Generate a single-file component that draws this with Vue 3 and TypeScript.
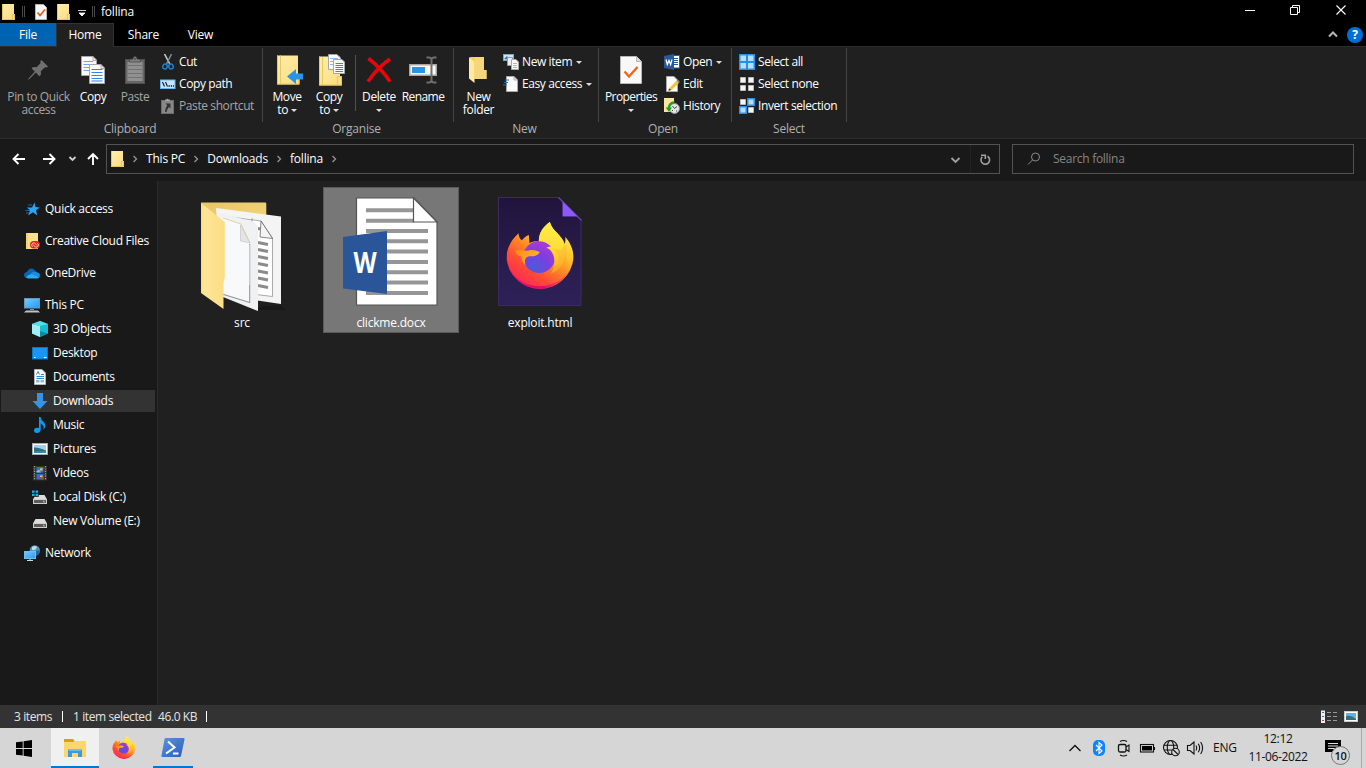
<script setup lang="ts">
import { ref } from 'vue'

interface NavItem { label: string; icon: string; child?: boolean; gap?: boolean }
interface FileItem { name: string; icon: string }
interface SmallCommand { label: string; icon: string; menu?: boolean; disabled?: boolean }

const tabs = ['Home', 'Share', 'View']
const activeTab = ref('Home')

const clipboard: SmallCommand[] = [
  { label: 'Cut', icon: 'cut' },
  { label: 'Copy path', icon: 'copypath' },
  { label: 'Paste shortcut', icon: 'shortcut', disabled: true },
]
const creation: SmallCommand[] = [
  { label: 'New item', icon: 'newitem', menu: true },
  { label: 'Easy access', icon: 'easy', menu: true },
]
const opening: SmallCommand[] = [
  { label: 'Open', icon: 'word', menu: true },
  { label: 'Edit', icon: 'edit' },
  { label: 'History', icon: 'history' },
]
const selecting: SmallCommand[] = [
  { label: 'Select all', icon: 'selall' },
  { label: 'Select none', icon: 'selnone' },
  { label: 'Invert selection', icon: 'selinv' },
]

const crumbs = ['This PC', 'Downloads', 'follina']

const nav: NavItem[] = [
  { label: 'Quick access', icon: 'star' },
  { label: 'Creative Cloud Files', icon: 'ccfiles', gap: true },
  { label: 'OneDrive', icon: 'onedrive', gap: true },
  { label: 'This PC', icon: 'pc', gap: true },
  { label: '3D Objects', icon: 'cube', child: true },
  { label: 'Desktop', icon: 'desktop', child: true },
  { label: 'Documents', icon: 'documents', child: true },
  { label: 'Downloads', icon: 'downloads', child: true },
  { label: 'Music', icon: 'music', child: true },
  { label: 'Pictures', icon: 'pictures', child: true },
  { label: 'Videos', icon: 'videos', child: true },
  { label: 'Local Disk (C:)', icon: 'disk-c', child: true },
  { label: 'New Volume (E:)', icon: 'disk', child: true },
  { label: 'Network', icon: 'network', gap: true },
]
const currentPlace = ref('Downloads')

const files: FileItem[] = [
  { name: 'src', icon: 'file-folder' },
  { name: 'clickme.docx', icon: 'file-word' },
  { name: 'exploit.html', icon: 'file-html' },
]
const selectedFile = ref('clickme.docx')
</script>

<template>
  <div class="screen">
    <svg class="sprite" width="0" height="0" aria-hidden="true">
      <defs>
        <linearGradient id="gFolder" x1="0" y1="0" x2="1" y2="1">
          <stop offset="0" stop-color="#ffeeae" /><stop offset="1" stop-color="#fbdc7d" />
        </linearGradient>
        <linearGradient id="gFlap" x1="0" y1="0" x2="1" y2="0">
          <stop offset="0" stop-color="#fbdb7c" /><stop offset="0.15" stop-color="#ffe597" /><stop offset="1" stop-color="#fbdd84" />
        </linearGradient>
        <linearGradient id="gBack" x1="0" y1="0" x2="1" y2="1">
          <stop offset="0" stop-color="#e9c566" /><stop offset="1" stop-color="#f7d982" />
        </linearGradient>
        <linearGradient id="gScreen" x1="0" y1="0" x2="1" y2="1">
          <stop offset="0" stop-color="#7cc9fb" /><stop offset="1" stop-color="#1f9cf5" />
        </linearGradient>
        <linearGradient id="gPage" x1="0" y1="0" x2="0" y2="1">
          <stop offset="0" stop-color="#21143b" /><stop offset="1" stop-color="#2e2158" />
        </linearGradient>
        <linearGradient id="gFox" x1="0.85" y1="0.12" x2="0.25" y2="0.95">
          <stop offset="0" stop-color="#fff04a" /><stop offset="0.3" stop-color="#ffc02f" />
          <stop offset="0.52" stop-color="#ff8524" /><stop offset="0.76" stop-color="#ff4a38" /><stop offset="1" stop-color="#ff2b4e" />
        </linearGradient>
        <linearGradient id="gFlame" x1="0.5" y1="0" x2="0.4" y2="1">
          <stop offset="0" stop-color="#fff04a" /><stop offset="0.5" stop-color="#ffdc38" /><stop offset="1" stop-color="#ff9a28" />
        </linearGradient>
        <linearGradient id="gRim" x1="0" y1="0" x2="1" y2="0">
          <stop offset="0" stop-color="#f3126c" /><stop offset="0.55" stop-color="#e4076f" /><stop offset="1" stop-color="#ff7a2e" />
        </linearGradient>
        <linearGradient id="gHead" x1="0" y1="0" x2="1" y2="0.4">
          <stop offset="0" stop-color="#ff8a16" /><stop offset="1" stop-color="#ffb52c" />
        </linearGradient>
        <radialGradient id="gGlobe" cx="0.35" cy="0.85" r="0.9">
          <stop offset="0" stop-color="#4b5bd8" /><stop offset="0.5" stop-color="#7a3fe0" /><stop offset="1" stop-color="#b437d8" />
        </radialGradient>
        <linearGradient id="gPs" x1="0" y1="0" x2="1" y2="1">
          <stop offset="0" stop-color="#5b93e6" /><stop offset="1" stop-color="#2a5dbc" />
        </linearGradient>
      </defs>

      <symbol id="folder" viewBox="0 0 14 16">
        <path d="M0 0H12V10H13V16H0Z" fill="url(#gFolder)" /><path d="M.5 0V15.5H12.5V10.5H10.5V15" fill="none" stroke="#e8c44f" stroke-width=".9" />
      </symbol>
      <symbol id="sheet-check" viewBox="0 0 12 16">
        <path d="M.5.5H8.5L11.5 3.5V15.5H.5Z" fill="#f7f7f7" stroke="#b5b5b5" /><path d="M2.500 8.500L5 11.500L10 5.500" fill="none" stroke="#ee5a14" stroke-width="1.700" />
      </symbol>
      <symbol id="pin" viewBox="0 0 20 20">
        <path d="M13.500 0L20 6.500L18.500 7.500L17 7.200L12.800 11.300L13 14.600L11.400 16.200L7.800 12.600L1.500 19L0 20L.8 18.200L6.800 11.600L3.600 8.400L5.100 7L8.500 7.200L12.700 3L12.200 1.300Z" fill="#757575" />
      </symbol>
      <symbol id="copydoc" viewBox="0 0 24 28">
        <path d="M.5.5H12L15.500 4V19.500H.5Z" fill="#fafafa" stroke="#a6a6a6" /><path d="M12 .5V4.500H15.500" fill="none" stroke="#a6a6a6" />
        <path d="M2.500 5.500H12M2.500 8.500H12M2.500 11.500H12M2.500 14.500H12" stroke="#6ea6ec" />
        <path d="M8.500 8.500H20L23.500 12V27.500H8.500Z" fill="#fafafa" stroke="#a6a6a6" /><path d="M20 8.500V12.500H23.500" fill="none" stroke="#a6a6a6" />
        <path d="M10.500 13.500H21.500M10.500 16.500H21.500M10.500 19.500H21.500M10.500 22.500H21.500M10.500 25H21.500" stroke="#3583e2" stroke-width="1.100" />
      </symbol>
      <symbol id="pasteboard" viewBox="0 0 20 28">
        <rect x=".5" y="3.500" width="19" height="24" fill="#6a6a6a" stroke="#525252" /><rect x="2.500" y="6" width="15" height="19" fill="#969696" />
        <path d="M3 9.500H17M3 13.500H17M3 17.500H17M3 21.500H17" stroke="#777" /><path d="M4.500 6V3.500L8 3Q8 .5 10 .5T12 3L15.500 3.500V6Z" fill="#858585" stroke="#4b4b4b" stroke-width=".8" /><circle cx="10" cy="3" r=".8" fill="#333" />
      </symbol>
      <symbol id="cut" viewBox="0 0 16 16">
        <path d="M4.500 0L9.800 10" stroke="#c6ccd2" stroke-width="1.600" /><path d="M11.500 0L6.500 10" stroke="#7f8b96" stroke-width="1.500" />
        <ellipse cx="5" cy="12.500" rx="2.200" ry="2.500" transform="rotate(20 5 12.500)" fill="none" stroke="#1c7fc9" stroke-width="1.600" /><ellipse cx="11" cy="12.500" rx="2.200" ry="2.500" transform="rotate(-20 11 12.500)" fill="none" stroke="#1c7fc9" stroke-width="1.600" />
      </symbol>
      <symbol id="copypath" viewBox="0 0 16 16">
        <rect x=".5" y="4" width="14.500" height="8.500" fill="#c5e6fc" stroke="#6cb5ea" /><path d="M2.500 6L4.500 10.500M5.500 6L7.500 10.500" stroke="#111" stroke-width="1.100" /><path d="M8.500 10H14" stroke="#111" stroke-dasharray="1.300 1" stroke-width="1.300" />
      </symbol>
      <symbol id="shortcut" viewBox="0 0 16 16">
        <rect x="1.500" y="2.500" width="12" height="13" fill="#8e8e8e" stroke="#727272" /><path d="M5 3V1.500H6.500L7.500.5L8.500 1.500H10V3Z" fill="#aaa" />
        <path d="M5.500 5.500H10.500V10.500L9 9Q7 11 6.500 14H5Q5 10 7.200 7.200Z" fill="#333" />
      </symbol>
      <symbol id="moveto" viewBox="0 0 28 30">
        <path d="M1 .5H22V21H23.500V29.500H1Z" fill="url(#gFolder)" /><path d="M1.500.5V29H23V21.500H19.500V29M4.500.5V29" fill="none" stroke="#eac760" /><path d="M11 21.500L20 14V18.500H27V24.500H20V29Z" fill="#2b93e6" />
      </symbol>
      <symbol id="copyto" viewBox="0 0 28 32">
        <path d="M1 2.500H22V22.500H24V31.500H1Z" fill="url(#gFolder)" /><path d="M1.500 2.500V31H23.500V22.500H19.500V31M4.500 3V31" fill="none" stroke="#eac760" />
        <path d="M10.500.5H19L22.500 4V15.500H10.500Z" fill="#fafafa" stroke="#a6a6a6" /><path d="M12 4.500H20M12 7.500H20M12 10.500H20" stroke="#8cb8ee" />
        <path d="M15.500 5.500H24L26.500 8V19.500H15.500Z" fill="#fafafa" stroke="#a6a6a6" /><path d="M17.500 9.500H25M17.500 11.500H25M17.500 13.500H25M17.500 15.500H25M17.500 17.500H25" stroke="#3583e2" />
      </symbol>
      <symbol id="delete" viewBox="0 0 26 26"><path d="M2.500 1.500Q15 11 24 24.500M24 2Q11 11 2 24.500" fill="none" stroke="#e8060c" stroke-width="3.500" /></symbol>
      <symbol id="rename" viewBox="0 0 28 28">
        <rect x=".75" y="8.750" width="26.500" height="10.500" fill="#fafafa" stroke="#a5a5a5" stroke-width="1.500" /><rect x="3" y="11" width="13" height="6" fill="#2b93e6" />
        <path d="M17.500 1.500H20Q22 1.500 22.500 3.500Q23 1.500 25 1.500H27.500M22.500 3.500V24.500M17.500 26.500H20Q22 26.500 22.500 24.500Q23 26.500 25 26.500H27.500" fill="none" stroke="#6f6f6f" stroke-width="2" />
      </symbol>
      <symbol id="newfolder" viewBox="0 0 20 28">
        <path d="M2 1H16V14H18.500V23H5Z" fill="#efcd6c" /><path d="M1 1L6.500 6V27L1 22.500Z" fill="#ffeaa4" /><path d="M6.500 1H16V14H18.500V23H6.500Z" fill="#f5d67b" />
      </symbol>
      <symbol id="newitem" viewBox="0 0 16 16">
        <rect x=".5" y=".5" width="10" height="6" fill="#c9e7fb" stroke="#7da6c4" /><path d="M1 5L4 2L7 6Z" fill="#2f7dac" /><path d="M4.500 3.500H9.500V11.500H4.500Z" fill="#eee" stroke="#999" /><path d="M8.500 5.500H13L15.500 8V15.500H8.500Z" fill="#f8f8f8" stroke="#aaa" /><path d="M10 9.500H14M10 11.500H14M10 13.500H14" stroke="#e8a0a0" />
      </symbol>
      <symbol id="easy" viewBox="0 0 16 16">
        <path d="M3.500.5H11L14.500 4V15.500H3.500Z" fill="#fafafa" stroke="#aaa" /><path d="M11 .5V4H14.500" fill="none" stroke="#aaa" /><path d="M2 4H6M1 6.500H5M0 9H4" stroke="#2273b9" stroke-width="1.200" />
      </symbol>
      <symbol id="properties" viewBox="0 0 22 28">
        <path d="M.5.5H16.500L21.500 5.500V27.500H.5Z" fill="#f8f8f8" stroke="#b6b6b6" /><path d="M16.500.5V5.500H21.500" fill="#ddd" stroke="#b6b6b6" /><path d="M4.500 15.500L9 20.500L17.500 11" fill="none" stroke="#f26514" stroke-width="2.300" />
      </symbol>
      <symbol id="word" viewBox="0 0 16 16">
        <rect x="8.500" y="1.500" width="7" height="12.500" fill="#fff" stroke="#2b579a" /><path d="M10 4.500H14M10 6.500H14M10 8.500H14M10 10.500H14" stroke="#2b579a" /><path d="M0 2L10 0V16L0 14Z" fill="#2b579a" /><path d="M2 5.500L3.300 10.500L5 6.500L6.600 10.500L8 5.500" fill="none" stroke="#fff" stroke-width="1.300" />
      </symbol>
      <symbol id="edit" viewBox="0 0 16 16">
        <path d="M2.500.5H10L13.500 4V15.500H2.500Z" fill="#fafafa" stroke="#aaa" /><path d="M5 12.500L12.500 4.500L15 7L7.500 14L4.500 14.800Z" fill="#f3c53c" /><path d="M12.500 4.500L15 7L15.800 5.500L14 3.800Z" fill="#888" /><path d="M4.500 14.800L5 12.500L7.200 14Z" fill="#333" />
      </symbol>
      <symbol id="history" viewBox="0 0 16 16">
        <path d="M0 0H10V11H11V14H0Z" fill="#ffe599" /><circle cx="10.500" cy="10.500" r="4.900" fill="#e7e7e7" stroke="#9b9b9b" /><path d="M8.500 8L10.500 10.500L13 8.500M8 12.500H9M12 13H13" fill="none" stroke="#444" /><path d="M10.500 4.500Q5 4.500 4.800 11" fill="none" stroke="#20a02c" stroke-width="2.300" /><path d="M1.500 9.500H8L5 14Z" fill="#20a02c" />
      </symbol>
      <symbol id="selall" viewBox="0 0 16 16"><path d="M0 0H16V16H0Z" fill="#2490ea" /><path d="M1.500 1.500H7V7H1.500ZM9 1.500H14.500V7H9ZM1.500 9H7V14.500H1.500ZM9 9H14.500V14.500H9Z" fill="#b6defb" /></symbol>
      <symbol id="selnone" viewBox="0 0 16 16"><path d="M1.500 1.500H6.500V6.500H1.500ZM9.500 1.500H14.500V6.500H9.500ZM1.500 9.500H6.500V14.500H1.500ZM9.500 9.500H14.500V14.500H9.500Z" fill="#f5f5f5" stroke="#bbb" /></symbol>
      <symbol id="selinv" viewBox="0 0 16 16"><path d="M1.500 1.500H6.500V6.500H1.500ZM9.500 9.500H14.500V14.500H9.500Z" fill="#f5f5f5" stroke="#bbb" /><path d="M8.750.75H15.250V7.250H8.750ZM.75 8.750H7.250V15.250H.75Z" fill="#b6defb" stroke="#2490ea" stroke-width="1.500" /></symbol>

      <symbol id="star" viewBox="0 0 16 16"><path d="M10.500 1.500L11.500 6L15.800 6.500L12 9.200L13.300 14.500L9 11.300L4.200 14.500L6 9.200L2.800 6.500H8Z" fill="#2ea3f2" /><path d="M4 4H8M1.500 9.500H6M2 12H5" stroke="#1768ad" /></symbol>
      <symbol id="ccfiles" viewBox="0 0 16 16"><path d="M2 0H14V16H2Z" fill="#ffe08a" /><path d="M3 0V16" stroke="#ebc45c" /><rect x="6" y="8" width="10" height="7.500" rx="3.700" fill="#e1251b" /><path d="M8.500 13.700Q6.500 12 8.500 10.300T12 11.500L13 12.500M13.500 10.300Q15.500 12 13.500 13.700T10 12.500L9 11.500" fill="none" stroke="#ffdcce" stroke-width=".9" /></symbol>
      <symbol id="onedrive" viewBox="0 0 16 16"><path d="M0 10.500A3.500 3.500 0 0 1 3 7A4.500 4.500 0 0 1 11 5.500A3 3 0 0 1 13 8L5 13H3A3 3 0 0 1 0 10.500Z" fill="#0a63b5" /><path d="M6.500 8.500Q9 6 12.500 7.200A3.200 3.200 0 0 1 15.500 12L8 10Z" fill="#1490df" /><path d="M2 12.500Q5 8 8.500 9.500L15.500 12Q14.500 13.500 13 13.500H4Z" fill="#31a8ef" /></symbol>
      <symbol id="pc" viewBox="0 0 16 16"><rect x=".5" y="1.500" width="15" height="9.500" fill="url(#gScreen)" stroke="#6298bf" /><path d="M6 12H10V13H6Z" fill="#7795ab" /><path d="M2 13.500H14L16 15.500H0Z" fill="#b9c4cc" /></symbol>
      <symbol id="cube" viewBox="0 0 16 16"><path d="M8 0L16 3V12.500L8 16L0 12.500V3Z" fill="#19bcd0" /><path d="M0 3L8 5V16L0 12.500Z" fill="#a3eef2" /><path d="M0 3L8 0L16 3L8 5Z" fill="#55dfe5" /><path d="M8 10L16 12.500L8 16Z" fill="#0c8ba7" /></symbol>
      <symbol id="desktop" viewBox="0 0 16 16"><rect x=".5" y="2.500" width="15" height="11.500" fill="#1996f1" stroke="#0b75ce" /><path d="M2 12.500H3.500M12 12.500H14.500" stroke="#fff" /></symbol>
      <symbol id="documents" viewBox="0 0 16 16"><path d="M2.500.5H10L13.500 4V15.500H2.500Z" fill="#fafafa" stroke="#b5b5b5" /><path d="M4.500 5.500L6 2.500L7.500 5.500M9 5.500H12M4.500 7.500H12M4.500 9.500H12" fill="none" stroke="#2b8bd5" /><path d="M4 11H12V13.500H4Z" fill="#91b8ce" /><path d="M8 11V14" stroke="#fff" /></symbol>
      <symbol id="downloads" viewBox="0 0 16 16"><path d="M5 0H11V8H15.500L8 16L.5 8H5Z" fill="#3694e8" /></symbol>
      <symbol id="music" viewBox="0 0 16 16"><path d="M7 0H8.500Q9 3 11.500 5Q15.500 9 11 13Q13 8.500 8.700 6.500V12Q8.500 16 5 16Q2 16 2 13.500T5.500 10.800L7 11Z" fill="#0a9bf5" /></symbol>
      <symbol id="pictures" viewBox="0 0 16 16"><rect x=".5" y="2.500" width="15" height="11" fill="#fff" stroke="#aaa" /><rect x="2" y="4" width="12" height="8" fill="#a5cfee" /><path d="M2 6.500Q6 6 14 9.500V11H2Z" fill="#2f7180" /><path d="M2 10.500L14 10V12H2Z" fill="#3f86b8" /></symbol>
      <symbol id="videos" viewBox="0 0 16 16"><rect x="1" y="1" width="14" height="14.500" fill="#333" /><path d="M2.500 1V15.500M13.500 1V15.500" stroke="#999" stroke-width="1.300" stroke-dasharray="1.200 1.200" /><path d="M4.500 2H11.500V7.500H4.500ZM4.500 9H11.500V14.500H4.500Z" fill="#356dc6" /><path d="M8 3.500L10.500 3V5.500H8ZM8 10.500H10.500V12H8Z" fill="#efbf3a" /><path d="M4.500 6L7 4.500L9 7.500H4.500Z" fill="#90b7e4" /><path d="M9 12H11.500V14.500H9Z" fill="#d13b32" /></symbol>
      <symbol id="disk" viewBox="0 0 16 16"><path d="M3.500 6H12.500L15 10.500H1Z" fill="#dcdcdc" /><rect x="1.500" y="10.500" width="13" height="4" fill="#5c5c5c" stroke="#cfcfcf" /><rect x="11" y="11.700" width="1.700" height="1.700" fill="#56e05a" /></symbol>
      <symbol id="disk-c" viewBox="0 0 16 16"><use href="#disk" width="16" height="16" /><path d="M0 1H6.800V7.800H0Z" fill="#191919" /><path d="M0 1.500H2.600V3.800H0ZM3.600 1.500H6.200V3.800H3.600ZM0 4.800H2.600V7.100H0ZM3.600 4.800H6.200V7.100H3.600Z" fill="#14b3f0" /></symbol>
      <symbol id="network" viewBox="0 0 16 16"><circle cx="10.800" cy="5.500" r="5.200" fill="#4f94bf" /><path d="M8 2Q11 0 13 2L11 5L8 5Z" fill="#b6e0ed" /><path d="M12 6L16 5L14 10H11Z" fill="#26668f" /><rect x=".5" y="6.500" width="11" height="7" fill="url(#gScreen)" stroke="#77bdec" /><path d="M3 15.500H9M6 14V15.500" stroke="#c7d9e5" /></symbol>

      <symbol id="file-folder" viewBox="0 0 136 125">
        <path d="M107 118L112 123H80L82 120Z" fill="#161616" opacity=".6" />
        <path d="M27 15.500H91.500Q92.300 15.500 92.300 17V62H27Z" fill="url(#gBack)" />
        <path d="M42 21L107 29.500V117L48 108Z" fill="#f4f4f4" />
        <path d="M57 30L87 34L98.500 51V109.500L78 107V31" fill="#fff" stroke="#888" stroke-width=".7" />
        <path d="M87 34L86 50L98.500 51.500Z" fill="#f4f4f4" stroke="#555" stroke-width=".7" />
        <path d="M80 41L87 42M84 55.500L94 57.500M84 62.500L94 64.500M84 69.500L94 71.500M84 76.500L94 78.500M84 84L94 86M84 91L94 93M84 98.500L94 100.500" stroke="#8b8b8b" stroke-width="3" />
        <path d="M43 25L80 35L84 39V124L49 110Z" fill="#f0f1f2" />
        <path d="M47 31L66 37L76 56V115L49 106Z" fill="#f8f9fb" />
        <path d="M49 31L67 37L76 56" fill="none" stroke="#e5d3a6" /><path d="M66.500 38V54L76 56Z" fill="#e4e4e5" stroke="#b9b9b9" stroke-width=".5" />
        <path d="M75.700 57V115.500L48 107" fill="none" stroke="#666" stroke-width=".7" /><path d="M75.500 58V98" stroke="#ead49a" stroke-width=".8" />
        <path d="M27 16L50.800 35V91L49.500 95V122L27 106Z" fill="url(#gFlap)" />
      </symbol>
      <symbol id="file-word" viewBox="0 0 136 125">
        <path d="M33.500 10.800H91L114 35V118H33.500Z" fill="#fff" stroke="#555" stroke-width="1.200" />
        <path d="M43 23.200H91M43 33.700H91M43 44H105M43 54.300H105M43 64.600H105M43 75H105M43 85.200H105M43 95.600H105M43 106H105" stroke="#969696" stroke-width="4" />
        <path d="M90.500 11V35H114Z" fill="#fff" stroke="#555" stroke-width="1.200" />
        <path d="M20 50L64 44V107L20 101.500Z" fill="#2a5699" />
        <text x="42" y="86" text-anchor="middle" textLength="23" lengthAdjust="spacingAndGlyphs" fill="#fff" font-family="'Open Sans', sans-serif" font-size="29" font-weight="700">W</text>
      </symbol>
      <symbol id="firefox" viewBox="0 0 202 210">
        <path d="M36 34C17 51 0 76 0 109A101 101 0 0 0 201 109C202 84 191 60 176 44C178 52 177 60 174 66C167 39 139 30 130 0C111 13 97 32 97 58C85 57 77 59 69 63L67 39C57 42 50 50 46 55C39 51 37 43 36 34Z" fill="url(#gFox)" />
        <path d="M0 109A101 101 0 0 0 201 109C199 157 150 193 100 193C46 193 4 154 0 109Z" fill="url(#gRim)" />
        <circle cx="98" cy="105" r="48" fill="url(#gGlobe)" />
        <path d="M130 0C111 13 97 32 97 58C113 58 126 64 134 75C128 74 124 75 120 77C143 85 153 122 133 155C171 141 184 98 174 66C167 39 139 30 130 0Z" fill="url(#gFlame)" />
        <path d="M138 78C162 94 166 128 133 155C178 144 188 104 174 66C168 88 155 85 138 78Z" fill="#ff9d28" opacity=".3" />
        <path d="M26 86C36 83 51 85 62 86C74 82 87 84 100 90C96 99 86 103 75 103C59 102 52 110 57 130C44 121 48 108 43 103C34 101 28 96 26 86Z" fill="url(#gHead)" />
      </symbol>
      <symbol id="file-html" viewBox="0 0 136 125">
        <path d="M26.500 10.500H87L109 33V118.500H26.500Z" fill="url(#gPage)" stroke="#3c2a60" />
        <path d="M86 10.500L109 33.500L105 30H90V14Z" fill="#150c2e" /><path d="M86.500 10.500L109.500 33.500" stroke="#6544a8" stroke-width="1.200" /><path d="M90.500 14.500L105.500 29.500H90.500Z" fill="#8f58fb" />
        <use href="#firefox" x="34.500" y="35" width="67.300" height="70" />
      </symbol>
      <symbol id="explorer" viewBox="0 0 22 18">
        <path d="M0 2H22V18H0Z" fill="#ffd66b" /><path d="M0 0H9L10.500 1.500L9.500 3H0Z" fill="#dc9e14" /><path d="M4 18V10.500H18V18H14V14H8V18Z" fill="#3a9be0" /><path d="M5 11H17V12H5Z" fill="#6ebced" />
      </symbol>
      <symbol id="powershell" viewBox="0 0 24 20">
        <path d="M4.500 0H22.500Q24 0 23.500 1.500L20 18Q19.500 19 18.500 19H1.500Q0 19 .5 17.500L3.500 1Q3.700 0 4.500 0Z" fill="url(#gPs)" /><path d="M7 3.500L13.500 9.500L5 15.500" fill="none" stroke="#fff" stroke-width="2" /><path d="M12 15.500H17.500" stroke="#fff" stroke-width="2" />
      </symbol>
    </svg>

    <header class="titlebar">
      <div class="quick">
        <svg class="q-folder" width="14" height="16"><use href="#folder" /></svg>
        <i class="q-sep"></i>
        <svg class="q-sheet" width="12" height="16"><use href="#sheet-check" /></svg>
        <svg class="q-folder2" width="14" height="16"><use href="#folder" /></svg>
        <svg class="q-menu" width="8" height="7" viewBox="0 0 8 7"><path d="M0 .5H8M1 3H7L4 6Z" fill="#fff" stroke="#fff" stroke-width=".8" /></svg>
        <i class="q-sep second"></i>
        <span class="window-title">follina</span>
      </div>
      <div class="window-controls">
        <svg width="46" height="22" viewBox="0 0 46 22"><path d="M18 10.500H28" stroke="#fff" /></svg>
        <svg width="46" height="22" viewBox="0 0 46 22"><path d="M17.500 7.500H24.500V14.500H17.500ZM19.500 7V5.500H26.500V12.500H25" fill="none" stroke="#fff" /></svg>
        <svg width="46" height="22" viewBox="0 0 46 22"><path d="M17.500 5.500L26.500 14.500M26.500 5.500L17.500 14.500" stroke="#fff" stroke-width="1.100" /></svg>
      </div>
    </header>

    <nav class="tabs">
      <div class="tab file">File</div>
      <div v-for="t in tabs" :key="t" class="tab" :class="{ active: t === activeTab }">{{ t }}</div>
      <div class="tab-tools">
        <svg width="10" height="7" viewBox="0 0 10 7"><path d="M1 5.500L5 1.500L9 5.500" fill="none" stroke="#b5b5b5" stroke-width="2" /></svg>
        <span class="help">?</span>
      </div>
    </nav>

    <section class="ribbon">
      <div class="group g-clip">
        <div class="commands">
          <div class="big dim w-pin"><svg width="20" height="20"><use href="#pin" /></svg><span>Pin to Quick<br>access</span></div>
          <div class="big"><svg width="24" height="28"><use href="#copydoc" /></svg><span>Copy</span></div>
          <div class="big dim"><svg width="20" height="28"><use href="#pasteboard" /></svg><span>Paste</span></div>
          <div class="smalls">
            <div v-for="c in clipboard" :key="c.label" class="small" :class="{ dim: c.disabled }"><svg width="16" height="16"><use :href="'#' + c.icon" /></svg>{{ c.label }}</div>
          </div>
        </div>
        <div class="caption">Clipboard</div>
      </div>
      <div class="group g-org">
        <div class="commands">
          <div class="big"><svg class="nudge" width="28" height="30"><use href="#moveto" /></svg><span>Move<br>to <i class="caret"></i></span></div>
          <div class="big"><svg class="nudge" width="28" height="32"><use href="#copyto" /></svg><span>Copy<br>to <i class="caret"></i></span></div>
          <div class="divider"></div>
          <div class="big"><svg width="26" height="26"><use href="#delete" /></svg><span>Delete<br><i class="caret"></i></span></div>
          <div class="big w-rename"><svg width="28" height="28"><use href="#rename" /></svg><span>Rename</span></div>
        </div>
        <div class="caption">Organise</div>
      </div>
      <div class="group g-new">
        <div class="commands">
          <div class="big w-new"><svg width="20" height="28"><use href="#newfolder" /></svg><span>New<br>folder</span></div>
          <div class="smalls">
            <div v-for="c in creation" :key="c.label" class="small"><svg width="16" height="16"><use :href="'#' + c.icon" /></svg>{{ c.label }}<i class="caret"></i></div>
          </div>
        </div>
        <div class="caption">New</div>
      </div>
      <div class="group g-open">
        <div class="commands">
          <div class="big w-prop"><svg width="22" height="28"><use href="#properties" /></svg><span>Properties<br><i class="caret"></i></span></div>
          <div class="smalls">
            <div v-for="c in opening" :key="c.label" class="small"><svg width="16" height="16"><use :href="'#' + c.icon" /></svg>{{ c.label }}<i v-if="c.menu" class="caret"></i></div>
          </div>
        </div>
        <div class="caption">Open</div>
      </div>
      <div class="group g-sel">
        <div class="commands">
          <div class="smalls">
            <div v-for="c in selecting" :key="c.label" class="small"><svg width="16" height="16"><use :href="'#' + c.icon" /></svg>{{ c.label }}</div>
          </div>
        </div>
        <div class="caption">Select</div>
      </div>
    </section>

    <section class="navbar">
      <svg class="history" width="106" height="42" viewBox="0 0 106 42">
        <path d="M25 20H14M18.500 15L13.500 20L18.500 25M43 20H54M49.500 15L54.500 20L49.500 25M93 26V15.500M88 20L93 15L98 20" fill="none" stroke="#fff" stroke-width="1.900" />
        <path d="M69.500 18L72.500 21L75.500 18" fill="none" stroke="#d0d0d0" stroke-width="1.800" />
      </svg>
      <div class="address">
        <svg class="addr-icon" width="14" height="16"><use href="#folder" /></svg>
        <template v-for="c in crumbs" :key="c">
          <svg class="chev" width="6" height="8" viewBox="0 0 6 8"><path d="M1.500 1L4.500 4L1.500 7" fill="none" stroke="#909090" stroke-width="1.400" /></svg>
          <span class="crumb">{{ c }}</span>
        </template>
        <svg class="chev" width="6" height="8" viewBox="0 0 6 8"><path d="M1.500 1L4.500 4L1.500 7" fill="none" stroke="#909090" stroke-width="1.400" /></svg>
        <svg class="addr-tools" width="60" height="28" viewBox="0 0 60 28">
          <path d="M11.500 13L15.500 17L19.500 13" fill="none" stroke="#a0a0a0" stroke-width="1.800" /><path d="M30.500 0V28" stroke="#232323" />
          <path d="M42.300 11.800A4.300 4.300 0 1 0 47.500 11.200M41 10.300H45.300V14" fill="none" stroke="#a0a0a0" stroke-width="1.600" />
        </svg>
      </div>
      <div class="search">
        <svg width="14" height="14" viewBox="0 0 14 14"><circle cx="8.500" cy="5" r="4" fill="none" stroke="#8b8b8b" /><path d="M5.500 8L1 12.500" stroke="#8b8b8b" /></svg>
        <span>Search follina</span>
      </div>
    </section>

    <main class="body">
      <aside class="sidebar">
        <div v-for="n in nav" :key="n.label" class="place" :class="{ child: n.child, gap: n.gap, current: n.label === currentPlace }">
          <svg width="16" height="16"><use :href="'#' + n.icon" /></svg><span>{{ n.label }}</span>
        </div>
      </aside>
      <div class="files">
        <div v-for="f in files" :key="f.name" class="item" :class="{ selected: f.name === selectedFile }">
          <svg width="136" height="125"><use :href="'#' + f.icon" /></svg>
          <span>{{ f.name }}</span>
        </div>
      </div>
    </main>

    <footer class="status">
      <span class="s-items">3 items</span><i></i><span class="s-sel">1 item selected</span><span class="s-size">46.0 KB</span><i></i>
      <svg class="views" width="40" height="14" viewBox="0 0 40 14">
        <path d="M1 .5H5V13H1Z" fill="#eee" /><path d="M2 2.500H4M2 6.500H4" stroke="#3573a8" /><path d="M2 10.500H4" stroke="#b44" />
        <path d="M7 2.500H11M13 2.500H17M7 6.500H11M13 6.500H17M7 10.500H11M13 10.500H17" stroke="#999" />
        <rect x="24.500" y="1.500" width="13" height="10" fill="#fff" stroke="#ccc" /><rect x="26" y="3" width="10" height="7" fill="#68aee2" /><path d="M26 6Q31 5 36 9V10H26Z" fill="#376f78" />
      </svg>
    </footer>

    <footer class="taskbar">
      <div class="task start"><svg width="16" height="17" viewBox="0 0 16 17"><path d="M0 2.300L6.700 1.400V8H0ZM7.600 1.200L16 0V8H7.600ZM0 9H6.700V15.600L0 14.700ZM7.600 9H16V17L7.600 15.800Z" fill="#000" /></svg></div>
      <div class="task open-app"><svg width="22" height="18"><use href="#explorer" /></svg></div>
      <div class="task fox"><svg width="24" height="24"><use href="#firefox" /></svg></div>
      <div class="task running"><svg width="24" height="20"><use href="#powershell" /></svg></div>
      <div class="tray">
        <svg width="140" height="40" viewBox="1066 728 140 40" fill="none" stroke="#111" stroke-width="1.100">
          <path d="M1069.500 751L1075 745.500L1080.500 751" stroke-width="1.300" />
          <rect x="1093" y="740" width="12" height="16" rx="5" fill="#0a84ff" stroke="none" /><path d="M1096 745L1102 751L1099 753.500V742.500L1102 745L1096 751" stroke="#fff" />
          <rect x="1118.500" y="744.500" width="7.500" height="7.500" rx="1.500" stroke-width="1.300" /><path d="M1126 747L1129 745V751.500L1126 749.500M1120 741.500Q1123.500 739.500 1127 741.500M1120 755Q1123.500 757 1127 755" />
          <rect x="1140.500" y="744.500" width="13" height="7.500" /><rect x="1142" y="746" width="10" height="4.500" fill="#000" stroke="none" /><path d="M1154.500 747V750" />
          <circle cx="1170.500" cy="747.500" r="7" /><ellipse cx="1170.500" cy="747.500" rx="3.200" ry="7" /><path d="M1164 745.300H1177M1164 750H1172" />
          <circle cx="1175.500" cy="752" r="3.800" fill="#d7d7d7" /><path d="M1173 749.500L1178 754.500" />
          <path d="M1187.500 745.500H1190L1194 742V754L1190 750.500H1187.500ZM1196 745.500Q1197.600 748 1196 750.500M1198.300 743.700Q1201 748 1198.300 752.300M1200.700 742Q1204.500 748 1200.700 754" />
        </svg>
        <span class="lang">ENG</span>
        <div class="clock"><span>12:12</span><span>11-06-2022</span></div>
        <div class="notify">
          <svg width="16" height="16" viewBox="0 0 16 16"><path d="M0 0H16V12H11V15L7.500 12H0Z" fill="#000" /><path d="M3 3.500H13M3 6H13M3 8.500H10" stroke="#ddd" /></svg>
          <b>10</b>
        </div>
        <div class="peek"></div>
      </div>
    </footer>
  </div>
</template>

<style>
body { margin: 0; overflow: hidden; }
</style>

<style scoped>
.screen { width: 1366px; height: 768px; display: flex; flex-direction: column; background: #202020; color: #fff; font: 12px/14px "Open Sans", "Noto Sans", sans-serif; letter-spacing: -0.27px; overflow: hidden; white-space: nowrap; }
.screen svg { flex: none; display: block; }
.sprite { position: absolute; }

.titlebar { height: 23px; background: #000; display: flex; justify-content: space-between; flex: none; }
.quick { display: flex; align-items: center; padding-left: 2px; }
.q-sep { width: 1px; height: 11px; border: 1px solid #4b4b4b; border-width: 0 1px; margin-left: 6px; }
.q-sheet { margin-left: 10px; }
.q-folder2 { margin-left: 10px; }
.q-menu { margin: 3px 0 0 7px; }
.q-sep.second { margin-left: 6px; }
.window-title { margin-left: 6px; letter-spacing: -0.2px; }
.window-controls { display: flex; margin-right: 1px; }

.tabs { height: 23px; background: #000; display: flex; flex: none; line-height: 24px; letter-spacing: -0.2px; }
.tab { width: 57px; text-align: center; box-sizing: border-box; padding-left: 2px; }
.tab.file { width: 56px; padding-left: 0; background: #0063b1; }
.tab.active { width: 58px; padding-left: 0; background: #202020; border: 1px solid #333; border-bottom: 0; height: 24px; line-height: 22px; position: relative; }
.tab-tools { margin-left: auto; display: flex; align-items: center; gap: 9px; padding-right: 3px; }
.help { width: 16px; height: 16px; border-radius: 50%; background: #0070d8; line-height: 16px; text-align: center; font-weight: 700; font-size: 12px; margin-right: 0; }

.ribbon { height: 91px; border-top: 1px solid #2d2d2d; border-bottom: 1px solid #2d2d2d; display: flex; flex: none; background: #202020; letter-spacing: -0.4px; }
.group { border-right: 1px solid transparent; border-image: linear-gradient(#202020 2px, #444 2px, #444 74px, #202020 74px) 1; box-sizing: border-box; display: flex; flex-direction: column; }
.commands { display: flex; height: 75px; }
.caption { text-align: center; color: #b0b0b0; line-height: 14px; padding-right: 7px; letter-spacing: -0.2px; }
.g-clip { width: 263px; padding-left: 5px; }
.g-org { width: 191px; padding-left: 3px; }
.g-new { width: 145px; padding-left: 3px; }
.g-open { width: 133px; padding-left: 3px; }
.g-sel { width: 115px; padding-left: 7px; }
.big { width: 42px; display: grid; grid-template-rows: 43px auto; justify-items: center; justify-content: center; line-height: 13px; text-align: center; }
.big svg { align-self: center; margin-top: 3px; }
.big svg.nudge { margin-left: 5px; }
.big.w-pin { width: 67px; }
.w-rename { width: 46px; letter-spacing: -0.55px; }
.w-new { width: 43px; letter-spacing: -0.3px; }
.w-prop { width: 58px; letter-spacing: -0.6px; }
.dim { color: #a6a6a6; }
.dim svg { opacity: .95; }
.divider { width: 1px; height: 56px; margin: 8px 2px 0 5px; background: #505050; }
.caret { display: inline-block; border: 3px solid transparent; border-top-color: #ddd; border-bottom: 0; vertical-align: 2px; }
.smalls { display: flex; flex-direction: column; padding-top: 4px; margin-left: 4px; }
.small { height: 22px; display: flex; align-items: center; }
.small svg { margin-right: 3px; }
.small .caret { margin-left: 4px; }
.g-sel .smalls { margin-left: 0; }
.g-new .smalls { margin-left: 3px; }
.g-org .caption, .g-new .caption { padding-right: 6px; }

.navbar { height: 42px; background: #191919; display: flex; align-items: flex-start; flex: none; letter-spacing: -0.2px; }
.address { width: 894px; height: 30px; box-sizing: border-box; border: 1px solid #535353; margin-top: 5px; display: flex; align-items: center; padding-left: 4px; }
.addr-icon { margin-right: 7px; }
.chev { margin-right: 8px; }
.crumb { margin-right: 8px; }
.addr-tools { margin-left: auto; margin-right: -1px; }
.search { width: 342px; height: 30px; box-sizing: border-box; border: 1px solid #535353; margin: 5px 0 0 12px; display: flex; align-items: center; color: #858585; padding-left: 14px; gap: 12px; letter-spacing: -0.28px; }

.body { display: flex; height: 524px; flex: none; }
.sidebar { width: 158px; background: #191919; border-right: 1px solid #2b2b2b; padding-top: 16px; box-sizing: border-box; }
.place { display: flex; align-items: center; gap: 5px; height: 24px; padding-left: 24px; }
.place.gap { margin-top: 8px; }
.place.child { padding-left: 32px; }
.place.current { background: #333; height: 22px; margin: 1px 2px 1px 1px; padding-left: 31px; }
.files { display: flex; gap: 13px; padding: 6px 0 0 16px; letter-spacing: -0.2px; }
.item { width: 136px; height: 146px; box-sizing: border-box; text-align: center; }
.item svg { margin-bottom: 4px; }
.item.selected { background: #777; box-shadow: inset 0 0 0 1px #5a5a5a; }

.status { height: 23px; background: #333; display: flex; align-items: center; color: #e5e5e5; flex: none; padding-left: 14px; letter-spacing: -0.4px; }
.status i { width: 1px; height: 11px; background: #fff; }
.s-items { width: 48px; }
.s-sel { width: 85px; margin-left: 10px; }
.s-size { width: 48px; }
.views { margin-left: auto; margin-right: 6px; }

.taskbar { height: 40px; background: #d6d6d6; color: #111; display: flex; flex: none; }
.task { width: 48px; height: 40px; display: flex; align-items: center; justify-content: center; box-sizing: border-box; }
.task.start { width: 51px; padding-right: 3px; }
.task.fox { padding-left: 2px; }
.open-app { background: #f0f0f0; border-bottom: 2px solid #0078d7; padding-top: 2px; }
.running { border-bottom: 2px solid #0078d7; width: 40px; margin-left: 6px; padding-top: 1px; }
.tray { margin-left: auto; display: flex; align-items: center; }
.lang { width: 36px; padding-left: 7px; box-sizing: border-box; }
.clock { width: 72px; display: flex; flex-direction: column; text-align: center; line-height: 18px; letter-spacing: -0.35px; }
.notify { position: relative; width: 47px; height: 40px; box-sizing: border-box; padding: 12px 0 0 11px; }
.notify b { position: absolute; left: 17px; top: 18px; width: 17px; height: 17px; border: 1px solid #777; border-radius: 50%; background: #d6d6d6; font-size: 11px; font-weight: 600; line-height: 17px; text-align: center; }
.peek { width: 4px; height: 40px; border-left: 1px solid #aaa; }
</style>
